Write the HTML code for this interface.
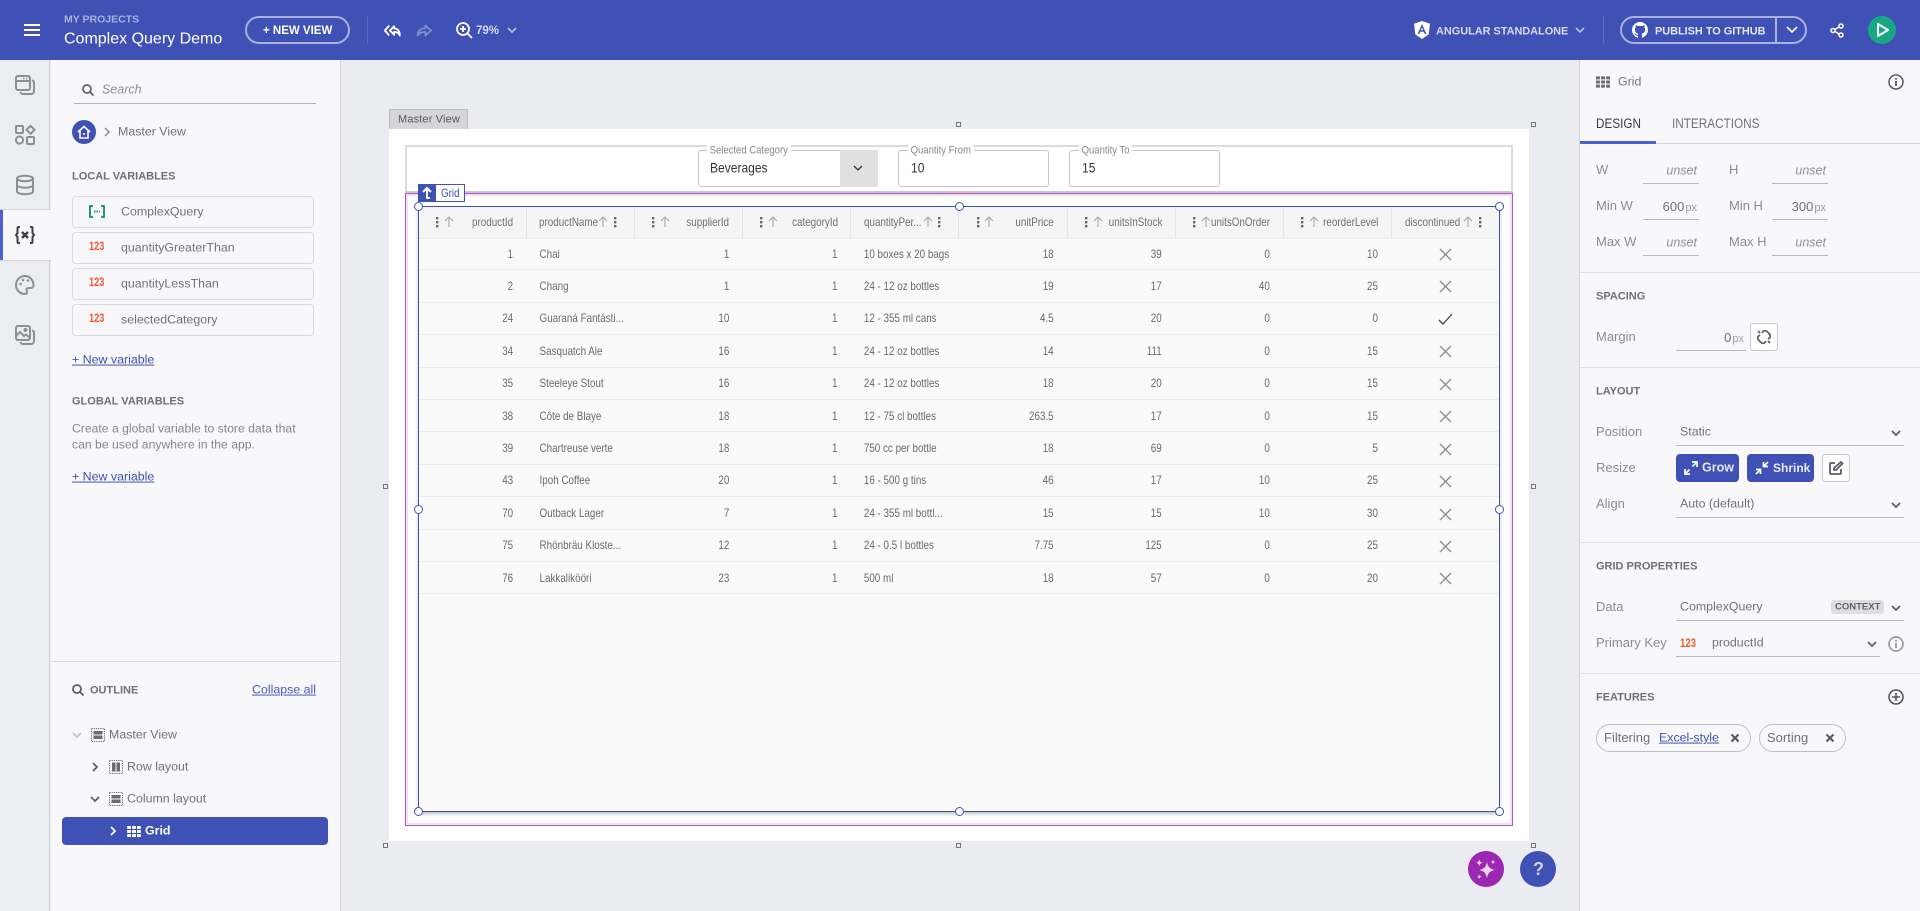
<!DOCTYPE html>
<html lang="en"><head><meta charset="utf-8"><title>Complex Query Demo</title>
<style>
*{box-sizing:border-box}
html,body{margin:0;padding:0;width:1920px;height:911px;overflow:hidden;background:#ebecf1;font-family:"Liberation Sans",sans-serif}
.a{position:absolute}
.t{position:absolute;transform:translateY(-50%);white-space:nowrap;line-height:1.2}
svg{position:absolute;overflow:visible}
.sec{font-size:11px;font-weight:700;color:#6e7079;margin-top:1px}
.p{font-size:12.4px;color:#6f7279}
.l{font-size:13px;color:#8a8c94}
.link{font-size:12.4px;color:#3f51b5;text-decoration:underline}
.card{position:absolute;left:72px;width:242px;height:32px;border:1px solid #d8d9de;border-radius:4px;background:#f8f8fb}
.n123{font-size:11.5px;font-weight:700;color:#f4572e;transform:translateY(-50%) scaleX(.8);transform-origin:left center}
.u{position:absolute;height:1px;background:#b7b8c0}
.val{font-size:12.5px;color:#8e9098;font-style:italic;text-align:right}
.v2{font-size:13px;color:#6f7279;text-align:right}
.px{font-size:11px;color:#9a9ca4;font-style:normal;margin-left:1px}
.hd{position:absolute;background:#e0e1e6;height:1px;left:1580px;width:340px}
.h{position:absolute;width:5px;height:5px;border:1px solid #77787e;background:#ebecf1}
.c{position:absolute;width:9px;height:9px;border:1.3px solid #3f51b5;border-radius:50%;background:#fff}
.nl{font-size:11px;color:#888;padding:0 3px;background:#fff;transform:translateY(-50%) scaleX(.865);transform-origin:left center}
.nv{font-size:14px;color:#333;transform:translateY(-50%) scaleX(.86);transform-origin:left center}
.grid{position:absolute;left:419px;top:207px;width:1081px;height:605px;background:#fafafa;font-size:12px;color:#6a6a6a}
.hr{display:grid;grid-template-columns:repeat(10,108.1px);height:32px;background:#f5f5f5;border-bottom:1px solid #ececec;position:relative}
.hr>div{border-right:1px solid #e6e6e6}
.hr>div:last-child{border:0}
.rows{position:absolute;left:0;top:31px;width:1318.3px;transform:scaleX(.82);transform-origin:left top}
.r{display:grid;grid-template-columns:repeat(10,131.83px);height:32.4px;border-bottom:1px solid #eeeeee;align-items:center}
.r>div{padding:0 17px 0 15.2px;white-space:nowrap}
.r .e{text-align:right}
.gh{position:absolute;top:15px;white-space:nowrap;color:#707070;font-size:12px;transform:translateY(-50%) scaleX(.82)}
.gl{transform-origin:left center}
.gr{transform-origin:right center}
</style></head><body>
<svg width="0" height="0" style="position:absolute"><defs>
<g id="dots" fill="#666"><rect x="0" y="0" width="2.4" height="2.4"/><rect x="0" y="4" width="2.4" height="2.4"/><rect x="0" y="8" width="2.4" height="2.4"/></g>
<g id="arr" fill="none" stroke="#a8a8a8" stroke-width="1.1"><path d="M5 11V1M1 5l4-4 4 4"/></g>
<g id="xx" fill="none" stroke="#8f8f8f" stroke-width="1.4"><path d="M0 0L11 11M11 0L0 11"/></g>
<g id="chev" fill="none" stroke="#5f6168" stroke-width="1.8"><path d="M0 0l4 4 4-4"/></g>
<g id="gr" fill="#6a6c74"><rect x="0" y="0" width="3.4" height="2.6"/><rect x="4.4" y="0" width="3.4" height="2.6"/><rect x="8.8" y="0" width="3.4" height="2.6"/><rect x="0" y="3.6" width="3.4" height="2.6"/><rect x="4.4" y="3.6" width="3.4" height="2.6"/><rect x="8.8" y="3.6" width="3.4" height="2.6"/><rect x="0" y="7.2" width="3.4" height="2.6"/><rect x="4.4" y="7.2" width="3.4" height="2.6"/><rect x="8.8" y="7.2" width="3.4" height="2.6"/></g>
<g id="lay"><rect x=".5" y=".5" width="13" height="13" fill="none" stroke="#6a6c74" stroke-dasharray="1.2 1"/><rect x="2.5" y="3" width="9" height="3.5" fill="#6a6c74"/><rect x="2.5" y="7.5" width="9" height="3.5" fill="#6a6c74"/></g>
</defs></svg>

<!-- HEADER -->
<div class="a" style="left:0;top:0;width:1920px;height:60px;background:#3f51b5"></div>
<svg style="left:24px;top:24px" width="16" height="12"><rect width="16" height="2" fill="#fff"/><rect y="5" width="16" height="2" fill="#fff"/><rect y="10" width="16" height="2" fill="#fff"/></svg>
<div class="t" style="left:64px;top:20px;font-size:10.5px;font-weight:700;color:#aab2de">MY PROJECTS</div>
<div class="t" style="left:64px;top:39px;font-size:16px;color:#fff">Complex Query Demo</div>
<div class="a" style="left:245px;top:16px;width:105px;height:28px;border:2px solid #a9b1dd;border-radius:14px"></div>
<div class="t" style="left:263px;top:32px;font-size:11.5px;font-weight:700;color:#fff">+ NEW VIEW</div>
<div class="a" style="left:367px;top:16px;width:1px;height:28px;background:#5a6bc4"></div>
<svg style="left:383px;top:22px" width="18" height="17" viewBox="0 0 24 24"><path fill="none" stroke="#fff" stroke-width="2.6" stroke-linejoin="round" d="M8 5L2 12l6 7M15 6L9 12l6 6v-4c4 0 6 1 8 5 0-6-3-10-8-10z"/></svg>
<svg style="left:415px;top:22px" width="18" height="17" viewBox="0 0 24 24"><path fill="none" stroke="#7f8cd0" stroke-width="2.6" stroke-linejoin="round" d="M14 5l8 7-8 7v-5c-5 0-8 1-11 5 0-6 4-10 11-10z"/></svg>
<svg style="left:456px;top:22px" width="17" height="17" viewBox="0 0 17 17" fill="none" stroke="#fff" stroke-width="1.8"><circle cx="7" cy="7" r="6"/><path d="M11.5 11.5L16 16M7 4v6M4 7h6"/></svg>
<div class="t" style="left:476px;top:32px;font-size:11.5px;font-weight:700;color:#d5d9f0">79%</div>
<svg style="left:508px;top:28px" width="8" height="5"><path d="M0 0l4 4 4-4" fill="none" stroke="#b8bfe4" stroke-width="1.6"/></svg>

<svg style="left:1414px;top:21px" width="16" height="18" viewBox="0 0 16 18"><path fill="#fff" d="M8 0l8 2.8-1.3 10.6L8 18l-6.7-4.6L0 2.8z"/><path fill="#3f51b5" d="M8 3L3.6 13h1.7l.9-2.3h3.6l.9 2.3h1.7zM8 6.5l1.2 2.8H6.8z"/></svg>
<div class="t" style="left:1436px;top:32px;font-size:10.9px;font-weight:700;color:#d7dbf2">ANGULAR STANDALONE</div>
<svg style="left:1576px;top:28px" width="8" height="5"><path d="M0 0l4 4 4-4" fill="none" stroke="#b8bfe4" stroke-width="1.6"/></svg>
<div class="a" style="left:1603px;top:16px;width:1px;height:28px;background:#5a6bc4"></div>
<div class="a" style="left:1620px;top:16px;width:187px;height:28px;border:2px solid #a9b1dd;border-radius:14px"></div>
<div class="a" style="left:1775px;top:16px;width:2px;height:28px;background:#a9b1dd"></div>
<svg style="left:1632px;top:22px" width="16" height="16" viewBox="0 0 16 16"><path fill="#fff" d="M8 0C3.58 0 0 3.58 0 8c0 3.54 2.29 6.53 5.47 7.59.4.07.55-.17.55-.38 0-.19-.01-.82-.01-1.49-2.01.37-2.53-.49-2.69-.94-.09-.23-.48-.94-.82-1.13-.28-.15-.68-.52-.01-.53.63-.01 1.08.58 1.23.82.72 1.21 1.87.87 2.33.66.07-.52.28-.87.51-1.07-1.78-.2-3.64-.89-3.64-3.95 0-.87.31-1.59.82-2.15-.08-.2-.36-1.02.08-2.12 0 0 .67-.21 2.2.82.64-.18 1.32-.27 2-.27.68 0 1.36.09 2 .27 1.53-1.04 2.2-.82 2.2-.82.44 1.1.16 1.92.08 2.12.51.56.82 1.27.82 2.15 0 3.07-1.87 3.75-3.65 3.95.29.25.54.73.54 1.48 0 1.07-.01 1.93-.01 2.2 0 .21.15.46.55.38A8.013 8.013 0 0016 8c0-4.42-3.58-8-8-8z"/></svg>
<div class="t" style="left:1655px;top:32px;font-size:10.9px;font-weight:700;color:#e3e6f6">PUBLISH TO GITHUB</div>
<svg style="left:1787px;top:27px" width="10" height="6"><path d="M0 0l5 5 5-5" fill="none" stroke="#fff" stroke-width="1.6"/></svg>
<svg style="left:1830px;top:23px" width="14" height="15" viewBox="0 0 14 15" fill="none" stroke="#fff" stroke-width="1.5"><circle cx="11" cy="3" r="2"/><circle cx="3" cy="7.5" r="2"/><circle cx="11" cy="12" r="2"/><path d="M5 6.5l4-2.5M5 8.5l4 2.5"/></svg>
<div class="a" style="left:1868px;top:16px;width:28px;height:28px;border-radius:50%;background:#19a683"></div>
<svg style="left:1877px;top:23px" width="12" height="14"><path d="M1 1l10 6-10 6z" fill="none" stroke="#fff" stroke-width="2" stroke-linejoin="round"/></svg>

<!-- LEFT RAIL -->
<div class="a" style="left:0;top:60px;width:50px;height:851px;background:#ecedf2;border-right:1px solid #cfd0d6"></div>
<div class="a" style="left:0;top:209px;width:51px;height:52px;background:#f8f8fb;border-top:1px solid #d2d3d9;border-bottom:1px solid #d2d3d9"></div>
<div class="a" style="left:0;top:210px;width:3px;height:50px;background:#4c60d2"></div>
<svg style="left:15px;top:75px" width="20" height="20" fill="none" stroke="#8d8e94" stroke-width="2"><rect x="1" y="1" width="14" height="14" rx="2"/><path d="M1 6h14"/><path d="M8 3.500h1.500M11 3.500h1.500" stroke-width="1.500"/><path d="M17 5.500c1 0 2 .8 2 2V16a3 3 0 01-3 3H8c-1.500 0-2.500-1-2.500-2"/></svg>
<svg style="left:15px;top:125px" width="20" height="20" fill="none" stroke="#8d8e94" stroke-width="2"><rect x="1" y="1" width="7" height="7" rx="1"/><path d="M15.500 .8l4 4-4 4-4-4z"/><circle cx="4.500" cy="15" r="3.600"/><rect x="12" y="12" width="7" height="7" rx="1"/></svg>
<svg style="left:16px;top:175px" width="18" height="20" fill="none" stroke="#8d8e94" stroke-width="2"><ellipse cx="9" cy="3.500" rx="8" ry="2.700"/><path d="M1 3.500v13c0 1.500 3.600 2.700 8 2.700s8-1.200 8-2.700v-13M1 10c0 1.500 3.600 2.700 8 2.700s8-1.200 8-2.700"/></svg>
<svg style="left:15px;top:226px" width="20" height="18" fill="none" stroke="#3c4049" stroke-width="2"><path d="M5 1H3.500a1 1 0 00-1 1v5L1 9l1.500 2v5a1 1 0 001 1H5M15 1h1.500a1 1 0 011 1v5L19 9l-1.500 2v5a1 1 0 01-1 1H15"/><path d="M7 6l6 6M13 6l-6 6" stroke-width="2.400"/></svg>
<svg style="left:15px;top:275px" width="20" height="20" fill="none" stroke="#8d8e94" stroke-width="2"><path d="M10 1a9 9 0 100 18c1.500 0 2-1 2-2 0-1.500-1-2-.5-3s1.500-1 3-1h1.500c1.500 0 2.500-1.500 2.500-3 0-5-4-9-8.500-9z"/><g fill="#8d8e94" stroke="none"><circle cx="5.500" cy="9" r="1.300"/><circle cx="8" cy="5" r="1.300"/><circle cx="13" cy="5.500" r="1.300"/></g></svg>
<svg style="left:15px;top:325px" width="20" height="20" fill="none" stroke="#8d8e94" stroke-width="2"><rect x="1" y="1" width="14" height="14" rx="2"/><path d="M1 11l4-4 4 4 2-1.500L15 13"/><circle cx="10.500" cy="5" r="1" fill="#8d8e94"/><path d="M17 5.500c1 0 2 .8 2 2V16a3 3 0 01-3 3H8c-1.500 0-2.500-1-2.500-2"/></svg>

<!-- LEFT PANEL -->
<div class="a" style="left:51px;top:60px;width:290px;height:851px;background:#f8f8fb;border-right:1px solid #d3d4da"></div>
<svg style="left:82px;top:84px" width="12" height="12" fill="none" stroke="#5c5e66" stroke-width="1.700"><circle cx="5" cy="5" r="4"/><path d="M8 8l3.500 3.500"/></svg>
<div class="t" style="left:102px;top:90px;font-size:12.5px;font-style:italic;color:#8e9098">Search</div>
<div class="a" style="left:74px;top:103px;width:242px;height:1px;background:#b3b4bb"></div>
<div class="a" style="left:72px;top:120px;width:24px;height:24px;border-radius:50%;background:#3f51b5"></div>
<svg style="left:77px;top:125px" width="14" height="14" fill="none" stroke="#fff" stroke-width="1.600"><path d="M1 7l6-5.500L13 7M3 6v7h8V6"/><path d="M6 9h2"/></svg>
<svg style="left:104px;top:127px" width="6" height="10"><path d="M1 1l4 4-4 4" fill="none" stroke="#8d8e94" stroke-width="1.500"/></svg>
<div class="t p" style="left:118px;top:132px">Master View</div>
<div class="t sec" style="left:72px;top:176px">LOCAL VARIABLES</div>

<div class="card" style="top:196px"></div><div class="card" style="top:232px"></div><div class="card" style="top:268px"></div><div class="card" style="top:304px"></div>
<svg style="left:89px;top:205px" width="16" height="13" fill="none" stroke="#0a8f6a" stroke-width="1.800"><path d="M4 1H1v11h3M12 1h3v11h-3"/><path d="M5 6.500h6" stroke-dasharray="1.500 1"/></svg>
<div class="t p" style="left:121px;top:212px">ComplexQuery</div>
<div class="t n123" style="left:89px;top:248px">123</div><div class="t p" style="left:121px;top:248px">quantityGreaterThan</div>
<div class="t n123" style="left:89px;top:284px">123</div><div class="t p" style="left:121px;top:284px">quantityLessThan</div>
<div class="t n123" style="left:89px;top:320px">123</div><div class="t p" style="left:121px;top:320px">selectedCategory</div>
<div class="t link" style="left:72px;top:360px">+ New variable</div>
<div class="t sec" style="left:72px;top:401px">GLOBAL VARIABLES</div>
<div class="t" style="left:72px;top:429px;font-size:12.2px;color:#85878f">Create a global variable to store data that</div>
<div class="t" style="left:72px;top:445px;font-size:12.2px;color:#85878f">can be used anywhere in the app.</div>
<div class="t link" style="left:72px;top:477px">+ New variable</div>

<div class="a" style="left:51px;top:661px;width:289px;height:1px;background:#d9dadf"></div>
<svg style="left:72px;top:684px" width="12" height="12" fill="none" stroke="#5c5e66" stroke-width="1.800"><circle cx="5" cy="5" r="4"/><path d="M8 8l3.500 3.500"/></svg>
<div class="t sec" style="left:90px;top:690px">OUTLINE</div>
<div class="t link" style="left:252px;top:690px;color:#4a5bbd">Collapse all</div>
<svg style="left:73px;top:733px" width="8" height="5"><path d="M0 0l4 4 4-4" fill="none" stroke="#c3c4ca" stroke-width="1.800"/></svg>
<svg style="left:91px;top:728px" width="14" height="14"><use href="#lay"/></svg>
<div class="t p" style="left:109px;top:735px">Master View</div>
<svg style="left:93px;top:763px" width="5" height="8"><path d="M0 0l4 4-4 4" fill="none" stroke="#5f6168" stroke-width="1.800"/></svg>
<svg style="left:109px;top:760px" width="14" height="14"><rect x=".5" y=".5" width="13" height="13" fill="none" stroke="#6a6c74" stroke-dasharray="1.200 1"/><rect x="3" y="2.500" width="3.500" height="9" fill="#6a6c74"/><rect x="7.500" y="2.500" width="3.500" height="9" fill="#6a6c74"/></svg>
<div class="t p" style="left:127px;top:767px">Row layout</div>
<svg style="left:91px;top:797px" width="8" height="5"><use href="#chev"/></svg>
<svg style="left:109px;top:792px" width="14" height="14"><use href="#lay"/></svg>
<div class="t p" style="left:127px;top:799px">Column layout</div>
<div class="a" style="left:62px;top:817px;width:266px;height:28px;border-radius:4px;background:#3f51b5"></div>
<svg style="left:111px;top:827px" width="5" height="8"><path d="M0 0l4 4-4 4" fill="none" stroke="#fff" stroke-width="1.800"/></svg>
<svg style="left:127px;top:826px" width="14" height="11" viewBox="0 0 12.200 9.800"><g fill="#fff"><rect x="0" y="0" width="3.400" height="2.600"/><rect x="4.400" y="0" width="3.400" height="2.600"/><rect x="8.800" y="0" width="3.400" height="2.600"/><rect x="0" y="3.600" width="3.400" height="2.600"/><rect x="4.400" y="3.600" width="3.400" height="2.600"/><rect x="8.800" y="3.600" width="3.400" height="2.600"/><rect x="0" y="7.200" width="3.400" height="2.600"/><rect x="4.400" y="7.200" width="3.400" height="2.600"/><rect x="8.800" y="7.200" width="3.400" height="2.600"/></g></svg>
<div class="t" style="left:145px;top:831px;font-size:12.4px;color:#fff;font-weight:700">Grid</div>

<!-- CANVAS -->
<div class="a" style="left:389px;top:109px;width:79px;height:20px;background:#d6d6da;border:1px solid #bdbec3;border-bottom:0"></div>
<div class="t" style="left:398px;top:120px;font-size:11px;color:#55575e;letter-spacing:.15px">Master View</div>
<div class="a" style="left:389px;top:129px;width:1140px;height:712px;background:#fff"></div>
<div class="h" style="left:956px;top:122px"></div><div class="h" style="left:1531px;top:122px"></div>
<div class="h" style="left:383px;top:484px"></div><div class="h" style="left:1531px;top:484px"></div>
<div class="h" style="left:383px;top:843px"></div><div class="h" style="left:956px;top:843px"></div><div class="h" style="left:1531px;top:843px"></div>

<div class="a" style="left:405px;top:145px;width:1108px;height:48px;border:2px solid #dcdcdc;border-bottom-color:#c9c9c9"></div>
<div class="a" style="left:698px;top:150px;width:180px;height:37px;border:1px solid #c4c4c4;border-radius:3px"></div>
<div class="a" style="left:840px;top:150px;width:38px;height:37px;background:#e0e0e0"></div>
<svg style="left:854px;top:166px" width="8" height="5"><path d="M0 0l4 4 4-4" fill="none" stroke="#333" stroke-width="1.300"/></svg>
<div class="t nl" style="left:707px;top:151px">Selected Category</div>
<div class="t nv" style="left:710px;top:168px">Beverages</div>
<div class="a" style="left:898px;top:150px;width:151px;height:37px;border:1px solid #c4c4c4;border-radius:3px"></div>
<div class="t nl" style="left:908px;top:151px">Quantity From</div>
<div class="t nv" style="left:911px;top:168px">10</div>
<div class="a" style="left:1069px;top:150px;width:151px;height:37px;border:1px solid #c4c4c4;border-radius:3px"></div>
<div class="t nl" style="left:1079px;top:151px">Quantity To</div>
<div class="t nv" style="left:1082px;top:168px">15</div>

<div class="a" style="left:405px;top:193px;width:1108px;height:633px;border:1px solid #b553c6;outline:2px solid #efe2f1;outline-offset:-3px"></div>

<div class="grid">
<div class="hr"><div></div><div></div><div></div><div></div><div></div><div></div><div></div><div></div><div></div><div></div></div>
<div class="rows">
<div class="r"><div class="e">1</div><div>Chai</div><div class="e">1</div><div class="e">1</div><div>10 boxes x 20 bags</div><div class="e">18</div><div class="e">39</div><div class="e">0</div><div class="e">10</div><div></div></div>
<div class="r"><div class="e">2</div><div>Chang</div><div class="e">1</div><div class="e">1</div><div>24 - 12 oz bottles</div><div class="e">19</div><div class="e">17</div><div class="e">40</div><div class="e">25</div><div></div></div>
<div class="r"><div class="e">24</div><div>Guaraná Fantásti...</div><div class="e">10</div><div class="e">1</div><div>12 - 355 ml cans</div><div class="e">4.5</div><div class="e">20</div><div class="e">0</div><div class="e">0</div><div></div></div>
<div class="r"><div class="e">34</div><div>Sasquatch Ale</div><div class="e">16</div><div class="e">1</div><div>24 - 12 oz bottles</div><div class="e">14</div><div class="e">111</div><div class="e">0</div><div class="e">15</div><div></div></div>
<div class="r"><div class="e">35</div><div>Steeleye Stout</div><div class="e">16</div><div class="e">1</div><div>24 - 12 oz bottles</div><div class="e">18</div><div class="e">20</div><div class="e">0</div><div class="e">15</div><div></div></div>
<div class="r"><div class="e">38</div><div>Côte de Blaye</div><div class="e">18</div><div class="e">1</div><div>12 - 75 cl bottles</div><div class="e">263.5</div><div class="e">17</div><div class="e">0</div><div class="e">15</div><div></div></div>
<div class="r"><div class="e">39</div><div>Chartreuse verte</div><div class="e">18</div><div class="e">1</div><div>750 cc per bottle</div><div class="e">18</div><div class="e">69</div><div class="e">0</div><div class="e">5</div><div></div></div>
<div class="r"><div class="e">43</div><div>Ipoh Coffee</div><div class="e">20</div><div class="e">1</div><div>16 - 500 g tins</div><div class="e">46</div><div class="e">17</div><div class="e">10</div><div class="e">25</div><div></div></div>
<div class="r"><div class="e">70</div><div>Outback Lager</div><div class="e">7</div><div class="e">1</div><div>24 - 355 ml bottl...</div><div class="e">15</div><div class="e">15</div><div class="e">10</div><div class="e">30</div><div></div></div>
<div class="r"><div class="e">75</div><div>Rhönbräu Kloste...</div><div class="e">12</div><div class="e">1</div><div>24 - 0.5 l bottles</div><div class="e">7.75</div><div class="e">125</div><div class="e">0</div><div class="e">25</div><div></div></div>
<div class="r"><div class="e">76</div><div>Lakkalikööri</div><div class="e">23</div><div class="e">1</div><div>500 ml</div><div class="e">18</div><div class="e">57</div><div class="e">0</div><div class="e">20</div><div></div></div>
</div>

<div class="gh gr" style="right:987px">productId</div>
<div class="gh gl" style="left:120px">productName</div>
<div class="gh gr" style="right:771px">supplierId</div>
<div class="gh gr" style="right:662px">categoryId</div>
<div class="gh gl" style="left:445px">quantityPer...</div>
<div class="gh gr" style="right:446px">unitPrice</div>
<div class="gh gr" style="right:338px">unitsInStock</div>
<div class="gh gr" style="right:230px">unitsOnOrder</div>
<div class="gh gr" style="right:122px">reorderLevel</div>
<div class="gh gl" style="left:986px">discontinued</div>

<svg style="left:17px;top:10px" width="3" height="11"><use href="#dots"/></svg><svg style="left:25px;top:9px" width="10" height="12"><use href="#arr"/></svg>
<svg style="left:179px;top:9px" width="10" height="12"><use href="#arr"/></svg><svg style="left:195px;top:10px" width="3" height="11"><use href="#dots"/></svg>
<svg style="left:233px;top:10px" width="3" height="11"><use href="#dots"/></svg><svg style="left:241px;top:9px" width="10" height="12"><use href="#arr"/></svg>
<svg style="left:341px;top:10px" width="3" height="11"><use href="#dots"/></svg><svg style="left:349px;top:9px" width="10" height="12"><use href="#arr"/></svg>
<svg style="left:504px;top:9px" width="10" height="12"><use href="#arr"/></svg><svg style="left:519px;top:10px" width="3" height="11"><use href="#dots"/></svg>
<svg style="left:558px;top:10px" width="3" height="11"><use href="#dots"/></svg><svg style="left:565px;top:9px" width="10" height="12"><use href="#arr"/></svg>
<svg style="left:666px;top:10px" width="3" height="11"><use href="#dots"/></svg><svg style="left:674px;top:9px" width="10" height="12"><use href="#arr"/></svg>
<svg style="left:774px;top:10px" width="3" height="11"><use href="#dots"/></svg><svg style="left:782px;top:9px" width="10" height="12"><use href="#arr"/></svg>
<svg style="left:882px;top:10px" width="3" height="11"><use href="#dots"/></svg><svg style="left:890px;top:9px" width="10" height="12"><use href="#arr"/></svg>
<svg style="left:1044px;top:9px" width="10" height="12"><use href="#arr"/></svg><svg style="left:1060px;top:10px" width="3" height="11"><use href="#dots"/></svg>

<svg style="left:1021px;top:42px" width="11" height="11"><use href="#xx"/></svg>
<svg style="left:1021px;top:74px" width="11" height="11"><use href="#xx"/></svg>
<svg style="left:1020px;top:107px" width="14" height="11"><path d="M0 6l4 4 9-10" fill="none" stroke="#444" stroke-width="1.300"/></svg>
<svg style="left:1021px;top:139px" width="11" height="11"><use href="#xx"/></svg>
<svg style="left:1021px;top:172px" width="11" height="11"><use href="#xx"/></svg>
<svg style="left:1021px;top:204px" width="11" height="11"><use href="#xx"/></svg>
<svg style="left:1021px;top:237px" width="11" height="11"><use href="#xx"/></svg>
<svg style="left:1021px;top:269px" width="11" height="11"><use href="#xx"/></svg>
<svg style="left:1021px;top:302px" width="11" height="11"><use href="#xx"/></svg>
<svg style="left:1021px;top:334px" width="11" height="11"><use href="#xx"/></svg>
<svg style="left:1021px;top:366px" width="11" height="11"><use href="#xx"/></svg>
</div>

<div class="a" style="left:418px;top:206px;width:1082px;height:606px;border:1.500px solid #3f51b5;box-shadow:0 2px 3px rgba(0,0,0,.25)"></div>
<div class="c" style="left:414px;top:202px"></div><div class="c" style="left:955px;top:202px"></div><div class="c" style="left:1495px;top:202px"></div>
<div class="c" style="left:414px;top:505px"></div><div class="c" style="left:1495px;top:505px"></div>
<div class="c" style="left:414px;top:807px"></div><div class="c" style="left:955px;top:807px"></div><div class="c" style="left:1495px;top:807px"></div>

<div class="a" style="left:418px;top:184px;width:47px;height:18px;background:#fff;border:1px solid #3f51b5"></div>
<div class="a" style="left:418px;top:184px;width:18px;height:18px;background:#3f51b5"></div>
<svg style="left:421px;top:187px" width="12" height="12" fill="none" stroke="#fff" stroke-width="2"><path d="M2 5l4-4 4 4M6 2v9h3"/></svg>
<div class="t" style="left:441px;top:193px;font-size:12px;color:#3f51b5;transform:translateY(-50%) scaleX(.82);transform-origin:left center">Grid</div>

<div class="a" style="left:1468px;top:851px;width:36px;height:36px;border-radius:50%;background:#9c27b0"></div>
<svg style="left:1476px;top:860px" width="22" height="20" fill="#f0d4f5"><path d="M11 2c1 5 3 7 8 8-5 1-7 3-8 8-1-5-3-7-8-8 5-1 7-3 8-8z"/><path d="M3.300-.8c.4 2.200 1.300 3.100 3.500 3.500-2.200.4-3.100 1.300-3.500 3.500-.4-2.200-1.300-3.100-3.500-3.500 2.200-.4 3.100-1.300 3.500-3.500zM17 -.5c.3 1.600.9 2.200 2.500 2.500-1.600.3-2.200.9-2.500 2.500-.3-1.600-.9-2.200-2.500-2.500 1.600-.3 2.200-.9 2.500-2.500zM3.300 14.200c.3 1.600.9 2.200 2.500 2.500-1.600.3-2.200.9-2.500 2.500-.3-1.600-.9-2.200-2.500-2.500 1.600-.3 2.200-.9 2.500-2.500z"/></svg>
<div class="a" style="left:1520px;top:851px;width:36px;height:36px;border-radius:50%;background:#3f51b5"></div>
<div class="t" style="left:1533px;top:870px;font-size:18px;font-weight:700;color:#cfd4ee">?</div>

<!-- RIGHT PANEL -->
<div class="a" style="left:1579px;top:60px;width:341px;height:851px;background:#f8f8fb;border-left:1px solid #d3d4da"></div>
<svg style="left:1596px;top:76px" width="14" height="12" viewBox="0 0 12.200 9.800"><use href="#gr"/></svg>
<div class="t p" style="left:1618px;top:82px">Grid</div>
<svg style="left:1888px;top:74px" width="16" height="16" fill="none" stroke="#55575e" stroke-width="1.500"><circle cx="8" cy="8" r="7"/><path d="M8 7v5M8 4v1.600" stroke-width="1.800"/></svg>
<div class="t" style="left:1596px;top:124px;font-size:13.5px;color:#3c3e46;transform:translateY(-50%) scaleX(.87);transform-origin:left center">DESIGN</div>
<div class="t" style="left:1672px;top:124px;font-size:13.5px;color:#6f7279;transform:translateY(-50%) scaleX(.87);transform-origin:left center">INTERACTIONS</div>
<div class="a" style="left:1580px;top:143px;width:340px;height:1px;background:#d6d7dc"></div>
<div class="a" style="left:1580px;top:141px;width:76px;height:3px;background:#4c60d2"></div>

<div class="t l" style="left:1596px;top:170px">W</div><div class="t val" style="right:223px;top:171px">unset</div><div class="u" style="left:1643px;top:183px;width:56px"></div>
<div class="t l" style="left:1729px;top:170px">H</div><div class="t val" style="right:94px;top:171px">unset</div><div class="u" style="left:1772px;top:183px;width:56px"></div>
<div class="t l" style="left:1596px;top:206px">Min W</div><div class="t v2" style="right:223px;top:207px">600<span class="px">px</span></div><div class="u" style="left:1643px;top:219px;width:56px"></div>
<div class="t l" style="left:1729px;top:206px">Min H</div><div class="t v2" style="right:94px;top:207px">300<span class="px">px</span></div><div class="u" style="left:1772px;top:219px;width:56px"></div>
<div class="t l" style="left:1596px;top:242px">Max W</div><div class="t val" style="right:223px;top:243px">unset</div><div class="u" style="left:1643px;top:255px;width:56px"></div>
<div class="t l" style="left:1729px;top:242px">Max H</div><div class="t val" style="right:94px;top:243px">unset</div><div class="u" style="left:1772px;top:255px;width:56px"></div>
<div class="hd" style="top:272px"></div>
<div class="t sec" style="left:1596px;top:296px">SPACING</div>
<div class="t l" style="left:1596px;top:337px">Margin</div>
<div class="t v2" style="right:176px;top:338px">0<span class="px">px</span></div><div class="u" style="left:1676px;top:350px;width:70px"></div>
<div class="a" style="left:1750px;top:323px;width:28px;height:28px;border:1px solid #c9cad0;border-radius:3px;background:#fff"></div>
<svg style="left:1757px;top:330px" width="14" height="14" fill="none" stroke="#5c5e66" stroke-width="1.800"><path d="M5 3l1-1.500a3 3 0 014 0l2.500 2.500a3 3 0 010 4L11 9M9 11l-1 1.500a3 3 0 01-4 0L1.500 10a3 3 0 010-4L3 5"/><path d="M1 1l2 2M13 13l-2-2"/></svg>
<div class="hd" style="top:367px"></div>
<div class="t sec" style="left:1596px;top:391px">LAYOUT</div>
<div class="t l" style="left:1596px;top:432px">Position</div>
<div class="t p" style="left:1680px;top:432px">Static</div><svg style="left:1892px;top:431px" width="8" height="5"><use href="#chev"/></svg><div class="u" style="left:1676px;top:445px;width:228px"></div>
<div class="t l" style="left:1596px;top:468px">Resize</div>
<div class="a" style="left:1676px;top:454px;width:63px;height:28px;border-radius:4px;background:#3f51b5"></div>
<svg style="left:1684px;top:461px" width="14" height="14" fill="none" stroke="#fff" stroke-width="1.700"><path d="M1 13l4.500-4.500M8.500 5.500L13 1M1 8v5h5M8 1h5v5"/></svg>
<div class="t" style="left:1702px;top:468px;font-size:12.5px;font-weight:700;color:#e6e9f8">Grow</div>
<div class="a" style="left:1747px;top:454px;width:67px;height:28px;border-radius:4px;background:#3f51b5"></div>
<svg style="left:1755px;top:461px" width="14" height="14" fill="none" stroke="#fff" stroke-width="1.700"><path d="M1 13l4-4M9 5l4-4M1 8.500h4.500V13M8.500 1v4.500H13"/></svg>
<div class="t" style="left:1773px;top:468px;font-size:12px;font-weight:700;color:#e6e9f8">Shrink</div>
<div class="a" style="left:1822px;top:454px;width:28px;height:28px;border:1px solid #c9cad0;border-radius:3px;background:#fff"></div>
<svg style="left:1829px;top:461px" width="14" height="14" fill="none" stroke="#5c5e66" stroke-width="1.800"><path d="M6 2H2a1 1 0 00-1 1v9a1 1 0 001 1h9a1 1 0 001-1V8"/><path d="M5 9V7l7-6 1.500 1.500-6.500 6.500z"/></svg>
<div class="t l" style="left:1596px;top:504px">Align</div>
<div class="t p" style="left:1680px;top:504px">Auto (default)</div><svg style="left:1892px;top:503px" width="8" height="5"><use href="#chev"/></svg><div class="u" style="left:1676px;top:517px;width:228px"></div>
<div class="hd" style="top:542px"></div>
<div class="t sec" style="left:1596px;top:566px">GRID PROPERTIES</div>
<div class="t l" style="left:1596px;top:607px">Data</div>
<div class="t p" style="left:1680px;top:607px">ComplexQuery</div>
<div class="a" style="left:1831px;top:600px;width:53px;height:14px;border-radius:3px;background:#dddee3"></div>
<div class="t" style="left:1835px;top:607px;font-size:9.5px;font-weight:700;color:#62646c">CONTEXT</div>
<svg style="left:1892px;top:606px" width="8" height="5"><use href="#chev"/></svg><div class="u" style="left:1676px;top:620px;width:228px"></div>
<div class="t l" style="left:1596px;top:643px">Primary Key</div>
<div class="t n123" style="left:1680px;top:643px;font-size:12px">123</div><div class="t p" style="left:1712px;top:643px">productId</div>
<svg style="left:1868px;top:642px" width="8" height="5"><use href="#chev"/></svg><div class="u" style="left:1676px;top:656px;width:204px"></div>
<svg style="left:1888px;top:636px" width="16" height="16" fill="none" stroke="#9a9ca3" stroke-width="1.700"><circle cx="8" cy="8" r="7"/><path d="M8 7v5M8 4v1.600" stroke-width="1.900"/></svg>
<div class="hd" style="top:673px"></div>
<div class="t sec" style="left:1596px;top:697px">FEATURES</div>
<svg style="left:1888px;top:689px" width="16" height="16" fill="none" stroke="#55575e" stroke-width="1.600"><circle cx="8" cy="8" r="7"/><path d="M8 4v8M4 8h8"/></svg>
<div class="a" style="left:1596px;top:724px;width:155px;height:28px;border:1px solid #bfc0c6;border-radius:14px"></div>
<div class="t l" style="left:1604px;top:738px;color:#6f7279">Filtering</div>
<div class="t link" style="left:1659px;top:738px">Excel-style</div>
<svg style="left:1731px;top:734px" width="8" height="8"><path d="M.5.500l7 7M7.500.500l-7 7" fill="none" stroke="#55575e" stroke-width="2"/></svg>
<div class="a" style="left:1759px;top:724px;width:87px;height:28px;border:1px solid #bfc0c6;border-radius:14px"></div>
<div class="t l" style="left:1767px;top:738px;color:#6f7279">Sorting</div>
<svg style="left:1826px;top:734px" width="8" height="8"><path d="M.5.500l7 7M7.500.500l-7 7" fill="none" stroke="#55575e" stroke-width="2"/></svg>
</body></html>
